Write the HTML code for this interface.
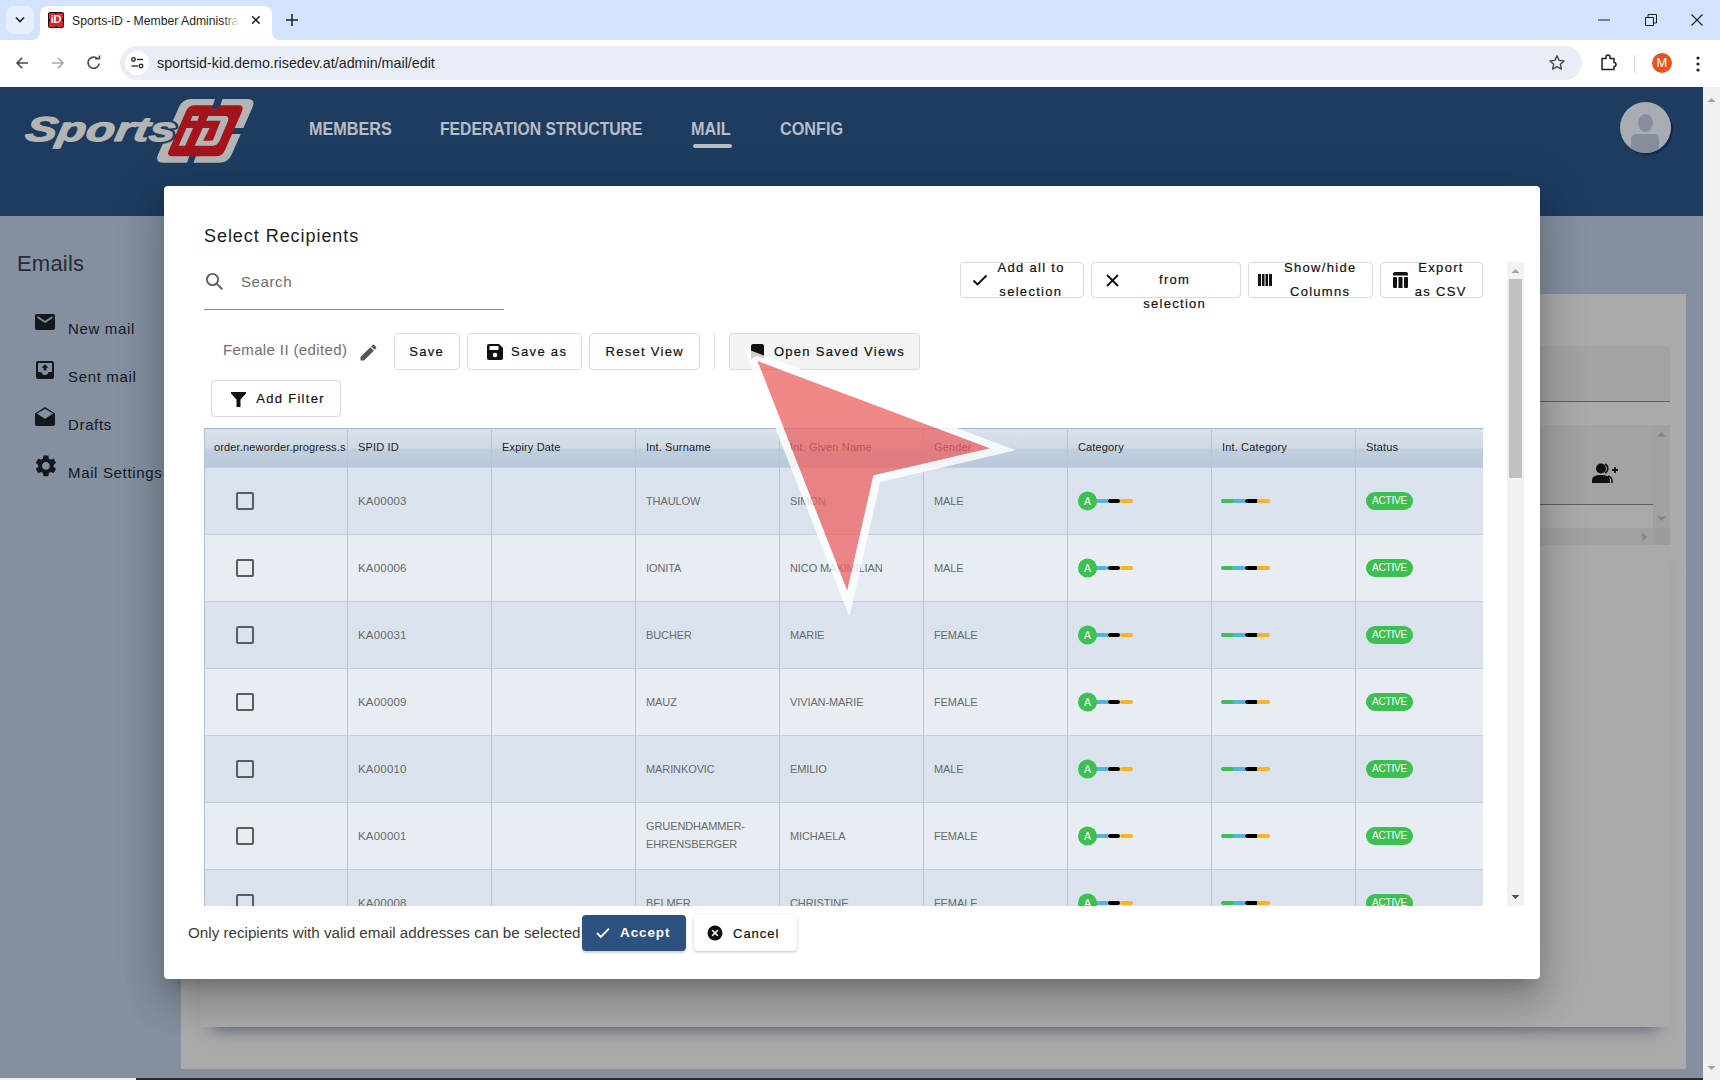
<!DOCTYPE html>
<html><head><meta charset="utf-8">
<style>
*{box-sizing:border-box;margin:0;padding:0}
html,body{width:1720px;height:1080px;overflow:hidden;background:#fff;font-family:"Liberation Sans",sans-serif}
.a{position:absolute}
svg{display:block}
/* chrome */
#tabbar{left:0;top:0;width:1720px;height:40px;background:#d3e3fd}
#toolbar{left:0;top:40px;width:1720px;height:47px;background:#fff}
#omni{left:120px;top:46px;width:1462px;height:34px;border-radius:17px;background:#e9eef6}
/* page */
#page{left:0;top:87px;width:1703px;height:993px;background:#84909f;overflow:hidden}
#hdr{left:0;top:0;width:1703px;height:129px;background:#1d3c60}
.nav{top:119px;height:22px;font-size:18px;font-weight:bold;color:#b9bdc3;white-space:nowrap;transform-origin:0 0;transform:scaleX(0.9)}
.side{left:68px;font-size:15px;color:#15171c;letter-spacing:0.65px;white-space:nowrap}
#dlg{left:164px;top:186px;width:1376px;height:793px;background:#fff;border-radius:4px;box-shadow:0 11px 15px -7px rgba(0,0,0,.2),0 24px 38px 3px rgba(0,0,0,.14),0 9px 46px 8px rgba(0,0,0,.12)}
.bt{font-size:13px;color:#111;letter-spacing:1.3px;white-space:nowrap;-webkit-text-stroke:0.2px #111}
.th{background:linear-gradient(#d9e2eb,#d0dae5 49%,#c0cfde 51%,#b9c9d9);border-top:1px solid #a6b6c8}
.htx{top:13px;font-size:11px;letter-spacing:0.15px;color:#1e1e1e;white-space:nowrap;overflow:hidden}
.td{font-size:11px;color:#6a6a6a;white-space:nowrap;letter-spacing:-0.1px}
.id{font-size:11.5px;letter-spacing:0.2px}
.cb{width:18px;height:18px;border:2px solid #5c5c5c;border-radius:2px}
.pill{width:47px;height:18px;border-radius:9px;background:#3cc051;color:#fff;font-size:10px;line-height:18px;text-align:center;letter-spacing:-0.2px}
#vscroll{left:1703px;top:87px;width:17px;height:993px;background:#f1f1f1}
</style></head><body>
<div id="tabbar" class="a">
  <div class="a" style="left:6px;top:6px;width:28px;height:28px;border-radius:8px;background:#e7effd"></div>
  <svg class="a" style="left:13px;top:14px" width="14" height="12" viewBox="0 0 14 12"><path d="M3 3.5 L7 7.5 L11 3.5" stroke="#1f1f1f" stroke-width="1.6" fill="none"/></svg>
  <div class="a" style="left:40px;top:6px;width:232px;height:34px;background:#fff;border-radius:8px 8px 0 0"></div>
  <div class="a" style="left:32px;top:32px;width:8px;height:8px;background:#fff"></div>
  <div class="a" style="left:32px;top:32px;width:8px;height:8px;background:#d3e3fd;border-radius:0 0 8px 0"></div>
  <div class="a" style="left:272px;top:32px;width:8px;height:8px;background:#fff"></div>
  <div class="a" style="left:272px;top:32px;width:8px;height:8px;background:#d3e3fd;border-radius:0 0 0 8px"></div>
  <div class="a" style="left:48px;top:12px;width:16px;height:16px;background:#111;border-radius:2px"></div>
  <div class="a" style="left:49px;top:13px;width:14px;height:14px;background:#e41e26;border-radius:1px"></div>
  <div class="a" style="left:48px;top:13px;width:16px;text-align:center;font:bold 11px 'Liberation Sans';color:#fff;letter-spacing:-0.3px">iD</div>
  <div class="a" style="left:55px;top:12px;width:2px;height:2px;background:#111"></div><div class="a" style="left:55px;top:26px;width:2px;height:2px;background:#111"></div>
  <div class="a" style="left:48px;top:19px;width:2px;height:2px;background:#111"></div><div class="a" style="left:62px;top:19px;width:2px;height:2px;background:#111"></div>
  <div class="a" style="left:72px;top:13.5px;width:168px;height:20px;overflow:hidden;white-space:nowrap;font-size:12.2px;color:#1f1f1f">Sports-iD - Member Administration</div>
  <div class="a" style="left:222px;top:8px;width:24px;height:24px;background:linear-gradient(90deg,rgba(255,255,255,0),#fff 75%)"></div>
  <svg class="a" style="left:251px;top:15px" width="10" height="10" viewBox="0 0 10 10"><path d="M1.2 1.2 L8.6 8.6 M8.6 1.2 L1.2 8.6" stroke="#1f1f1f" stroke-width="1.5"/></svg>
  <svg class="a" style="left:285px;top:13px" width="14" height="14" viewBox="0 0 14 14"><path d="M7 1 V13 M1 7 H13" stroke="#1f1f1f" stroke-width="1.5"/></svg>
  <svg class="a" style="left:1598px;top:19px" width="14" height="2" viewBox="0 0 14 2"><path d="M0 1 H12" stroke="#1f1f1f" stroke-width="1"/></svg>
  <svg class="a" style="left:1645px;top:14px" width="12" height="12" viewBox="0 0 12 12"><path d="M0.5 3.5 H8.5 V11.5 H0.5 Z M3 3.5 V0.5 H11.5 V9 H8.5" stroke="#1f1f1f" stroke-width="1" fill="none"/></svg>
  <svg class="a" style="left:1691px;top:14px" width="12" height="12" viewBox="0 0 12 12"><path d="M0.5 0.5 L11.5 11.5 M11.5 0.5 L0.5 11.5" stroke="#1f1f1f" stroke-width="1.1"/></svg>
</div>
<div id="toolbar" class="a">
  <svg class="a" style="left:14px;top:15px" width="16" height="16" viewBox="0 0 16 16"><path d="M14 8 H3 M8.2 2.8 L3 8 L8.2 13.2" stroke="#474747" stroke-width="1.6" fill="none"/></svg>
  <svg class="a" style="left:50px;top:15px" width="16" height="16" viewBox="0 0 16 16"><path d="M2 8 H13 M7.8 2.8 L13 8 L7.8 13.2" stroke="#a8a8a8" stroke-width="1.6" fill="none"/></svg>
  <svg class="a" style="left:86px;top:15px" width="16" height="16" viewBox="0 0 16 16"><path d="M13.2 8.5 A5.6 5.6 0 1 1 11.6 3.7" stroke="#474747" stroke-width="1.6" fill="none"/><path d="M9.2 3.6 H13.5 V0.5" stroke="#474747" stroke-width="1.6" fill="none"/></svg>
</div>
<div id="omni" class="a">
  <div class="a" style="left:5px;top:5px;width:24px;height:24px;border-radius:12px;background:#fff"></div>
  <svg class="a" style="left:11px;top:11px" width="13" height="12" viewBox="0 0 13 12"><circle cx="2.5" cy="2.5" r="1.8" stroke="#1f1f1f" stroke-width="1.3" fill="none"/><path d="M6 2.5 H12" stroke="#1f1f1f" stroke-width="1.3"/><circle cx="10" cy="9" r="1.8" stroke="#1f1f1f" stroke-width="1.3" fill="none"/><path d="M0.5 9 H7" stroke="#1f1f1f" stroke-width="1.3"/></svg>
  <div class="a" style="left:37px;top:9px;font-size:14.3px;color:#1f1f1f;white-space:nowrap">sportsid-kid.demo.risedev.at/admin/mail/edit</div>
  <svg class="a" style="left:1428px;top:8px" width="18" height="18" viewBox="0 0 18 18"><path d="M9 1.8 L11.1 6.4 L16 6.9 L12.3 10.2 L13.4 15.1 L9 12.6 L4.6 15.1 L5.7 10.2 L2 6.9 L6.9 6.4 Z" stroke="#474747" stroke-width="1.4" fill="none" stroke-linejoin="round"/></svg>
</div>
<div class="a" style="left:0;top:40px">
  <svg class="a" style="left:1600px;top:14px" width="18" height="18" viewBox="0 0 18 18"><path d="M2 4.5 H6 V3 A2 2 0 0 1 10 3 V4.5 H14 V8.5 A2 2 0 0 1 14 12.5 V15.5 H2 Z" stroke="#1f1f1f" stroke-width="1.5" fill="none" stroke-linejoin="round"/></svg>
  <div class="a" style="left:1634px;top:15px;width:1px;height:18px;background:#c4d5f5"></div>
  <div class="a" style="left:1652px;top:13px;width:20px;height:20px;border-radius:10px;background:#e8521e;color:#fff;font-size:13px;line-height:20px;text-align:center">M</div>
  <svg class="a" style="left:1695px;top:15px" width="6" height="18" viewBox="0 0 6 18"><circle cx="3" cy="3" r="1.6" fill="#1f1f1f"/><circle cx="3" cy="9" r="1.6" fill="#1f1f1f"/><circle cx="3" cy="15" r="1.6" fill="#1f1f1f"/></svg>
</div>

<div id="page" class="a"></div>
<div id="hdr" class="a" style="top:87px"></div>
<!-- logo -->
<svg class="a" style="left:0;top:0" width="270" height="180" viewBox="0 0 270 180">
  <path d="M178.9,107.2 Q182.5,99.0 191.5,99.0 L247.1,99.0 Q256.1,99.0 252.5,107.2 L231.7,154.5 Q228.1,162.7 219.1,162.7 L163.5,162.7 Q154.5,162.7 158.1,154.5 Z" fill="#b4b4b4"/>
  <path d="M228,128 L248,128 L248,134 L228,134 Z" fill="#1d3c60"/>
  <path d="M190.5,152.5 L197,152.5 L192.5,166 L186,166 Z" fill="#1d3c60"/>
  <path d="M186.0,111.2 Q188.6,105.3 195.1,105.3 L238.1,105.3 Q244.6,105.3 242.0,111.2 L224.8,150.4 Q222.2,156.3 215.7,156.3 L172.7,156.3 Q166.2,156.3 168.8,150.4 Z" fill="#a3141b"/>
  <path d="M216,96 L223.5,96 L219.3,108.5 L211.8,108.5 Z" fill="#1d3c60"/>
  <path d="M192.4,116.1 L199.1,116.1 L197.6,120.7 L190.6,120.7 Z M186.5,128.1 L193.1,128.1 L185.2,145.7 L178.7,145.7 Z M208.3,116.1 L225,116.1 Q229.5,116.1 228,121 L219.5,141 Q217.5,145.7 212,145.7 L194.6,145.7 L202.8,128.1 L209.6,128.1 L203.1,140.7 L211.3,140.7 Q213.5,140.7 214.3,137 L220.6,120.7 L206.1,120.7 Z" fill="#b4b4b4"/>
  <g transform="translate(24,140.8) skewX(-10)"><text x="0" y="0" font-family="Liberation Sans" font-weight="bold" font-style="italic" font-size="34.5" fill="#1d3c60" stroke="#1d3c60" stroke-width="5" stroke-linejoin="round" textLength="150" lengthAdjust="spacingAndGlyphs">Sports</text></g>
  <g transform="translate(24,140.8) skewX(-10)"><text x="0" y="0" font-family="Liberation Sans" font-weight="bold" font-style="italic" font-size="34.5" fill="#b4b4b4" stroke="#b4b4b4" stroke-width="1.2" stroke-linejoin="round" textLength="150" lengthAdjust="spacingAndGlyphs">Sports</text></g>
</svg>
<!-- nav -->
<div class="a nav" style="left:309px;width:80px">MEMBERS</div>
<div class="a nav" style="left:439.5px;width:201px;transform:scaleX(0.874)">FEDERATION STRUCTURE</div>
<div class="a nav" style="left:691px;width:39px">MAIL</div>
<div class="a nav" style="left:779.5px;width:62px">CONFIG</div>
<div class="a" style="left:693px;top:144px;width:39px;height:4px;border-radius:2px;background:#b9bdc3"></div>
<!-- avatar -->
<div class="a" style="left:1622px;top:104px;width:51px;height:51px;border-radius:50%;background:#16294a"></div>
<div class="a" style="left:1620px;top:102px;width:51px;height:51px;border-radius:50%;background:#a9adb3;overflow:hidden">
  <div class="a" style="left:18px;top:12px;width:15px;height:18px;border-radius:50%;background:#858f9c"></div>
  <div class="a" style="left:11px;top:32px;width:28px;height:30px;border-radius:5px 5px 0 0;background:#858f9c"></div>
</div>
<!-- sidebar -->
<div class="a" style="left:17px;top:251px;font-size:22px;color:#272b34;letter-spacing:0.2px">Emails</div>
<div class="a side" style="top:320px">New mail</div>
<div class="a side" style="top:368px">Sent mail</div>
<div class="a side" style="top:416px">Drafts</div>
<div class="a side" style="top:464px">Mail Settings</div>
<svg class="a" style="left:35px;top:314px" width="20" height="16" viewBox="0 0 20 16"><rect x="0" y="0" width="20" height="16" rx="2" fill="#15171c"/><path d="M2.5 3 L10 8 L17.5 3" stroke="#84909f" stroke-width="1.6" fill="none"/></svg>
<svg class="a" style="left:36px;top:361px" width="18" height="18" viewBox="0 0 18 18"><path fill-rule="evenodd" fill="#15171c" d="M2 0 H16 Q18 0 18 2 V16 Q18 18 16 18 H2 Q0 18 0 16 V2 Q0 0 2 0 Z M2 2 V11 H5.5 Q6 14 9 14 Q12 14 12.5 11 H16 V2 Z"/><path fill="#15171c" d="M9 3.2 L5.5 6.8 H7.6 V9.6 H10.4 V6.8 H12.5 Z"/></svg>
<svg class="a" style="left:35px;top:407px" width="20" height="19" viewBox="0 0 20 19"><path d="M0 6.5 L10 0 L20 6.5 V17 Q20 19 18 19 H2 Q0 19 0 17 Z" fill="#15171c"/><path d="M1.8 6.6 L10 1.9 L18.2 6.6 L10 11.8 Z" fill="#84909f"/></svg>
<svg class="a" style="left:32.5px;top:453px" width="25.8" height="25.8" viewBox="0 0 24 24"><path fill="#15171c" d="M19.14 12.94c.04-.3.06-.61.06-.94 0-.32-.02-.64-.07-.94l2.03-1.58c.18-.14.23-.41.12-.61l-1.92-3.32c-.12-.22-.37-.29-.59-.22l-2.39.96c-.5-.38-1.03-.7-1.62-.94l-.36-2.54c-.04-.24-.24-.41-.48-.41h-3.84c-.24 0-.43.17-.47.41l-.36 2.54c-.59.24-1.13.57-1.62.94l-2.39-.96c-.22-.08-.47 0-.59.22L2.74 8.87c-.12.21-.08.47.12.61l2.03 1.58c-.05.3-.09.63-.09.94s.02.64.07.94l-2.03 1.58c-.18.14-.23.41-.12.61l1.92 3.32c.12.22.37.29.59.22l2.39-.96c.5.38 1.03.7 1.62.94l.36 2.54c.05.24.24.41.48.41h3.84c.24 0 .44-.17.47-.41l.36-2.54c.59-.24 1.13-.56 1.62-.94l2.39.96c.22.08.47 0 .59-.22l1.92-3.32c.12-.22.07-.47-.12-.61l-2.01-1.58zM12 15.6c-1.98 0-3.6-1.62-3.6-3.6s1.62-3.6 3.6-3.6 3.6 1.62 3.6 3.6-1.62 3.6-3.6 3.6z"/></svg>
<!-- background card -->
<div class="a" style="left:180px;top:294px;width:1506px;height:775px;background:#aaaaaa;border-left:1px solid #8a929c"></div>
<div class="a" style="left:200px;top:346px;width:1470px;height:56px;background:#a3a3a3;border-radius:4px 4px 0 0;border-bottom:1px solid #5f5f5f"></div>
<div class="a" style="left:200px;top:425px;width:1453px;height:80px;background:#a3a3a3;border-bottom:1px solid #5f5f5f"></div>
<div class="a" style="left:1653px;top:425px;width:17px;height:103px;background:#a1a1a1"></div>
<div class="a" style="left:200px;top:528px;width:1453px;height:17px;background:#a1a1a1"></div>
<div class="a" style="left:1653px;top:528px;width:17px;height:17px;background:#9c9c9c"></div>
<svg class="a" style="left:1656px;top:431px" width="11" height="6" viewBox="0 0 11 6"><path d="M1 5.5 L5.5 1 L10 5.5 Z" fill="#868686"/></svg>
<svg class="a" style="left:1656px;top:516px" width="11" height="6" viewBox="0 0 11 6"><path d="M1 0.5 L5.5 5 L10 0.5 Z" fill="#868686"/></svg>
<svg class="a" style="left:1642px;top:532px" width="6" height="10" viewBox="0 0 6 10"><path d="M0.5 0.5 L5 5 L0.5 9.5 Z" fill="#868686"/></svg>
<svg class="a" style="left:1592px;top:463px" width="26" height="20" viewBox="0 0 26 20"><circle cx="9" cy="5.5" r="5" fill="#111"/><path d="M0 20 V17 Q0 12 9 12 Q18 12 18 17 V20 Z" fill="#111"/><path d="M13 1 A5 5 0 0 1 13 10" stroke="#111" stroke-width="1.5" fill="none"/><path d="M16 13 Q20 14 20 18 V20" stroke="#111" stroke-width="1.5" fill="none"/><path d="M23 4 V10 M20 7 H26" stroke="#111" stroke-width="1.8"/></svg>
<div class="a" style="left:200px;top:545px;width:1470px;height:482px;background:#aaaaaa;box-shadow:0 14px 16px -12px rgba(30,50,80,0.6)"></div>
<!-- taskbar edge -->
<div class="a" style="left:0;top:1078px;width:1720px;height:2px;background:#2a2a2a"></div>
<div class="a" style="left:0;top:1078px;width:136px;height:2px;background:#f0f0f0"></div>
<div id="dlg" class="a"></div>
<div class="a" style="left:204px;top:226px;font-size:18px;color:#1c1c1c;letter-spacing:0.95px;white-space:nowrap">Select Recipients</div>
<svg class="a" style="left:205px;top:272px" width="19" height="19" viewBox="0 0 19 19"><circle cx="7.5" cy="7.5" r="5.6" stroke="#5f5f5f" stroke-width="1.9" fill="none"/><path d="M11.6 11.6 L17.3 17.3" stroke="#5f5f5f" stroke-width="2"/></svg>
<div class="a" style="left:241px;top:273px;font-size:15px;color:#6e6e6e;letter-spacing:0.6px">Search</div>
<div class="a" style="left:204px;top:309px;width:300px;height:1px;background:#8c8c8c"></div>
<div class="a" style="left:960px;top:262px;width:124px;height:36px;background:#fff;border:1px solid #dadada;border-radius:4px"></div>
<div class="a" style="left:1091px;top:262px;width:150px;height:36px;background:#fff;border:1px solid #dadada;border-radius:4px"></div>
<div class="a" style="left:1248px;top:262px;width:125px;height:36px;background:#fff;border:1px solid #dadada;border-radius:4px"></div>
<div class="a" style="left:1380px;top:262px;width:103px;height:36px;background:#fff;border:1px solid #dadada;border-radius:4px"></div>
<div class="a bt" style="left:930.5px;top:260px;width:200px;text-align:center;padding-left:1.3px;">Add all to</div>
<div class="a bt" style="left:930.2px;top:284px;width:200px;text-align:center;padding-left:1.3px;">selection</div>
<div class="a bt" style="left:1074.0px;top:272px;width:200px;text-align:center;padding-left:1.3px;">from</div>
<div class="a bt" style="left:1074.0px;top:296px;width:200px;text-align:center;padding-left:1.3px;">selection</div>
<div class="a bt" style="left:1219.6px;top:260px;width:200px;text-align:center;padding-left:1.3px;">Show/hide</div>
<div class="a bt" style="left:1219.5px;top:284px;width:200px;text-align:center;padding-left:1.3px;">Columns</div>
<div class="a bt" style="left:1340.4px;top:260px;width:200px;text-align:center;padding-left:1.3px;">Export</div>
<div class="a bt" style="left:1340.1px;top:284px;width:200px;text-align:center;padding-left:1.3px;">as CSV</div>
<svg class="a" style="left:972px;top:274px" width="16" height="13" viewBox="0 0 16 13"><path d="M1.5 6.5 L5.5 10.5 L14.5 1.5" stroke="#111" stroke-width="1.9" fill="none"/></svg>
<svg class="a" style="left:1106px;top:274px" width="13" height="13" viewBox="0 0 13 13"><path d="M1 1 L12 12 M12 1 L1 12" stroke="#111" stroke-width="1.8"/></svg>
<svg class="a" style="left:1258px;top:274px" width="14" height="12" viewBox="0 0 14 12"><rect x="0" y="0" width="3" height="12" fill="#111"/><rect x="4" y="0" width="2.5" height="12" fill="#111"/><rect x="7.5" y="0" width="2.5" height="12" fill="#111"/><rect x="11" y="0" width="3" height="12" fill="#111"/></svg>
<svg class="a" style="left:1393px;top:272px" width="15" height="16" viewBox="0 0 15 16"><path d="M0 2 Q0 0 2 0 H13 Q15 0 15 2 V3.5 H0 Z" fill="#111"/><rect x="0" y="5" width="4" height="11" rx="1" fill="#111"/><rect x="5.5" y="5" width="4" height="11" fill="#111"/><rect x="11" y="5" width="4" height="11" rx="1" fill="#111"/></svg>
<div class="a" style="left:223px;top:341px;font-size:15px;color:#707070;letter-spacing:0.38px;white-space:nowrap">Female II (edited)</div>
<svg class="a" style="left:360px;top:344px" width="17" height="17" viewBox="0 0 17 17"><path d="M0.5 13 V16.5 H4 L13.8 6.7 L10.3 3.2 Z M16.2 4.3 Q16.8 3.7 16.2 3.1 L13.9 0.8 Q13.3 0.2 12.7 0.8 L11.2 2.3 L14.7 5.8 Z" fill="#555"/></svg>
<div class="a" style="left:394px;top:333px;width:66px;height:37px;background:#fff;border:1px solid #dadada;border-radius:4px"></div>
<div class="a" style="left:467px;top:333px;width:115px;height:37px;background:#fff;border:1px solid #dadada;border-radius:4px"></div>
<div class="a" style="left:589px;top:333px;width:111px;height:37px;background:#fff;border:1px solid #dadada;border-radius:4px"></div>
<div class="a" style="left:714px;top:333px;width:1px;height:37px;background:#e0e0e0"></div>
<div class="a" style="left:729px;top:333px;width:191px;height:37px;background:#f3f3f3;border:1px solid #d9d9d9;border-radius:4px"></div>
<div class="a" style="left:211px;top:380px;width:130px;height:37px;background:#fff;border:1px solid #dadada;border-radius:4px"></div>
<div class="a bt" style="left:326.1px;top:343.5px;width:200px;text-align:center;padding-left:1.3px;">Save</div>
<div class="a bt" style="left:438.5px;top:343.5px;width:200px;text-align:center;padding-left:1.3px;">Save as</div>
<div class="a bt" style="left:544.1px;top:343.5px;width:200px;text-align:center;padding-left:1.3px;">Reset View</div>
<div class="a bt" style="left:738.8px;top:343.5px;width:200px;text-align:center;padding-left:1.3px;">Open Saved Views</div>
<div class="a bt" style="left:189.9px;top:390.6px;width:200px;text-align:center;padding-left:1.3px;">Add Filter</div>
<svg class="a" style="left:487px;top:344px" width="16" height="16" viewBox="0 0 16 16"><path d="M0 2 Q0 0 2 0 H12 L16 4 V14 Q16 16 14 16 H2 Q0 16 0 14 Z" fill="#111"/><rect x="2.5" y="2" width="9" height="4" fill="#fff"/><circle cx="8" cy="11" r="2.3" fill="#fff"/></svg>
<svg class="a" style="left:751px;top:344px" width="13" height="15" viewBox="0 0 13 15"><path d="M0 2 Q0 0 2 0 H11 Q13 0 13 2 V15 L6.5 11.5 L0 15 Z" fill="#111"/></svg>
<svg class="a" style="left:231px;top:392px" width="15" height="15" viewBox="0 0 15 15"><path d="M0 0 H15 V1.5 L9.5 7.5 V14.5 Q9.5 15 9 15 H6 Q5.5 15 5.5 14.5 V7.5 L0 1.5 Z" fill="#111"/></svg>
<div id="tbl" class="a" style="left:204px;top:428px;width:1279px;height:478px;overflow:hidden">
<div class="a th" style="left:0;top:0;width:1279px;height:40px"></div>
<div class="a htx" style="left:10px;width:133px">order.neworder.progress.s</div>
<div class="a htx" style="left:154px;width:133px">SPID ID</div>
<div class="a htx" style="left:298px;width:133px">Expiry Date</div>
<div class="a htx" style="left:442px;width:133px">Int. Surname</div>
<div class="a htx" style="left:586px;width:133px">Int. Given Name</div>
<div class="a htx" style="left:730px;width:133px">Gender</div>
<div class="a htx" style="left:874px;width:133px">Category</div>
<div class="a htx" style="left:1018px;width:133px">Int. Category</div>
<div class="a htx" style="left:1162px;width:116px">Status</div>
<div class="a" style="left:0;top:39px;width:1279px;height:67px;background:#dae3ed;border-top:1px solid #c6cfd9"></div>
<div class="a cb" style="left:32px;top:64px"></div>
<div class="a td id" style="left:154px;top:67px">KA00003</div>
<div class="a td" style="left:442px;top:67px">THAULOW</div>
<div class="a td" style="left:586px;top:67px">SIMON</div>
<div class="a td" style="left:730px;top:67px">MALE</div>
<svg class="a" style="left:863px;top:63px" width="80" height="20" viewBox="0 0 80 20"><rect x="29" y="8" width="12" height="4" fill="#52b3e0"/><rect x="41" y="8" width="12" height="4" rx="2" fill="#000"/><rect x="53" y="8" width="13" height="4" rx="2" fill="#fbb321"/><circle cx="20.5" cy="10" r="9.5" fill="#3cc051"/><text x="20.5" y="13.8" text-anchor="middle" font-family="Liberation Sans" font-size="10.5" fill="#fff">A</text></svg>
<svg class="a" style="left:1007px;top:63px" width="80" height="20" viewBox="0 0 80 20"><rect x="10" y="8" width="13" height="4" rx="2" fill="#3cc051"/><rect x="22" y="8" width="12" height="4" fill="#52b3e0"/><rect x="34" y="8" width="13" height="4" rx="2" fill="#000"/><rect x="46" y="8" width="13" height="4" rx="2" fill="#fbb321"/></svg>
<div class="a pill" style="left:1162px;top:64px">ACTIVE</div>
<div class="a" style="left:0;top:106px;width:1279px;height:67px;background:#e8edf4;border-top:1px solid #c6cfd9"></div>
<div class="a cb" style="left:32px;top:131px"></div>
<div class="a td id" style="left:154px;top:134px">KA00006</div>
<div class="a td" style="left:442px;top:134px">IONITA</div>
<div class="a td" style="left:586px;top:134px">NICO MAXIMILIAN</div>
<div class="a td" style="left:730px;top:134px">MALE</div>
<svg class="a" style="left:863px;top:130px" width="80" height="20" viewBox="0 0 80 20"><rect x="29" y="8" width="12" height="4" fill="#52b3e0"/><rect x="41" y="8" width="12" height="4" rx="2" fill="#000"/><rect x="53" y="8" width="13" height="4" rx="2" fill="#fbb321"/><circle cx="20.5" cy="10" r="9.5" fill="#3cc051"/><text x="20.5" y="13.8" text-anchor="middle" font-family="Liberation Sans" font-size="10.5" fill="#fff">A</text></svg>
<svg class="a" style="left:1007px;top:130px" width="80" height="20" viewBox="0 0 80 20"><rect x="10" y="8" width="13" height="4" rx="2" fill="#3cc051"/><rect x="22" y="8" width="12" height="4" fill="#52b3e0"/><rect x="34" y="8" width="13" height="4" rx="2" fill="#000"/><rect x="46" y="8" width="13" height="4" rx="2" fill="#fbb321"/></svg>
<div class="a pill" style="left:1162px;top:131px">ACTIVE</div>
<div class="a" style="left:0;top:173px;width:1279px;height:67px;background:#dae3ed;border-top:1px solid #c6cfd9"></div>
<div class="a cb" style="left:32px;top:198px"></div>
<div class="a td id" style="left:154px;top:201px">KA00031</div>
<div class="a td" style="left:442px;top:201px">BUCHER</div>
<div class="a td" style="left:586px;top:201px">MARIE</div>
<div class="a td" style="left:730px;top:201px">FEMALE</div>
<svg class="a" style="left:863px;top:197px" width="80" height="20" viewBox="0 0 80 20"><rect x="29" y="8" width="12" height="4" fill="#52b3e0"/><rect x="41" y="8" width="12" height="4" rx="2" fill="#000"/><rect x="53" y="8" width="13" height="4" rx="2" fill="#fbb321"/><circle cx="20.5" cy="10" r="9.5" fill="#3cc051"/><text x="20.5" y="13.8" text-anchor="middle" font-family="Liberation Sans" font-size="10.5" fill="#fff">A</text></svg>
<svg class="a" style="left:1007px;top:197px" width="80" height="20" viewBox="0 0 80 20"><rect x="10" y="8" width="13" height="4" rx="2" fill="#3cc051"/><rect x="22" y="8" width="12" height="4" fill="#52b3e0"/><rect x="34" y="8" width="13" height="4" rx="2" fill="#000"/><rect x="46" y="8" width="13" height="4" rx="2" fill="#fbb321"/></svg>
<div class="a pill" style="left:1162px;top:198px">ACTIVE</div>
<div class="a" style="left:0;top:240px;width:1279px;height:67px;background:#e8edf4;border-top:1px solid #c6cfd9"></div>
<div class="a cb" style="left:32px;top:265px"></div>
<div class="a td id" style="left:154px;top:268px">KA00009</div>
<div class="a td" style="left:442px;top:268px">MAUZ</div>
<div class="a td" style="left:586px;top:268px">VIVIAN-MARIE</div>
<div class="a td" style="left:730px;top:268px">FEMALE</div>
<svg class="a" style="left:863px;top:264px" width="80" height="20" viewBox="0 0 80 20"><rect x="29" y="8" width="12" height="4" fill="#52b3e0"/><rect x="41" y="8" width="12" height="4" rx="2" fill="#000"/><rect x="53" y="8" width="13" height="4" rx="2" fill="#fbb321"/><circle cx="20.5" cy="10" r="9.5" fill="#3cc051"/><text x="20.5" y="13.8" text-anchor="middle" font-family="Liberation Sans" font-size="10.5" fill="#fff">A</text></svg>
<svg class="a" style="left:1007px;top:264px" width="80" height="20" viewBox="0 0 80 20"><rect x="10" y="8" width="13" height="4" rx="2" fill="#3cc051"/><rect x="22" y="8" width="12" height="4" fill="#52b3e0"/><rect x="34" y="8" width="13" height="4" rx="2" fill="#000"/><rect x="46" y="8" width="13" height="4" rx="2" fill="#fbb321"/></svg>
<div class="a pill" style="left:1162px;top:265px">ACTIVE</div>
<div class="a" style="left:0;top:307px;width:1279px;height:67px;background:#dae3ed;border-top:1px solid #c6cfd9"></div>
<div class="a cb" style="left:32px;top:332px"></div>
<div class="a td id" style="left:154px;top:335px">KA00010</div>
<div class="a td" style="left:442px;top:335px">MARINKOVIC</div>
<div class="a td" style="left:586px;top:335px">EMILIO</div>
<div class="a td" style="left:730px;top:335px">MALE</div>
<svg class="a" style="left:863px;top:331px" width="80" height="20" viewBox="0 0 80 20"><rect x="29" y="8" width="12" height="4" fill="#52b3e0"/><rect x="41" y="8" width="12" height="4" rx="2" fill="#000"/><rect x="53" y="8" width="13" height="4" rx="2" fill="#fbb321"/><circle cx="20.5" cy="10" r="9.5" fill="#3cc051"/><text x="20.5" y="13.8" text-anchor="middle" font-family="Liberation Sans" font-size="10.5" fill="#fff">A</text></svg>
<svg class="a" style="left:1007px;top:331px" width="80" height="20" viewBox="0 0 80 20"><rect x="10" y="8" width="13" height="4" rx="2" fill="#3cc051"/><rect x="22" y="8" width="12" height="4" fill="#52b3e0"/><rect x="34" y="8" width="13" height="4" rx="2" fill="#000"/><rect x="46" y="8" width="13" height="4" rx="2" fill="#fbb321"/></svg>
<div class="a pill" style="left:1162px;top:332px">ACTIVE</div>
<div class="a" style="left:0;top:374px;width:1279px;height:67px;background:#e8edf4;border-top:1px solid #c6cfd9"></div>
<div class="a cb" style="left:32px;top:399px"></div>
<div class="a td id" style="left:154px;top:402px">KA00001</div>
<div class="a td" style="left:442px;top:389px;line-height:18px">GRUENDHAMMER-<br>EHRENSBERGER</div>
<div class="a td" style="left:586px;top:402px">MICHAELA</div>
<div class="a td" style="left:730px;top:402px">FEMALE</div>
<svg class="a" style="left:863px;top:398px" width="80" height="20" viewBox="0 0 80 20"><rect x="29" y="8" width="12" height="4" fill="#52b3e0"/><rect x="41" y="8" width="12" height="4" rx="2" fill="#000"/><rect x="53" y="8" width="13" height="4" rx="2" fill="#fbb321"/><circle cx="20.5" cy="10" r="9.5" fill="#3cc051"/><text x="20.5" y="13.8" text-anchor="middle" font-family="Liberation Sans" font-size="10.5" fill="#fff">A</text></svg>
<svg class="a" style="left:1007px;top:398px" width="80" height="20" viewBox="0 0 80 20"><rect x="10" y="8" width="13" height="4" rx="2" fill="#3cc051"/><rect x="22" y="8" width="12" height="4" fill="#52b3e0"/><rect x="34" y="8" width="13" height="4" rx="2" fill="#000"/><rect x="46" y="8" width="13" height="4" rx="2" fill="#fbb321"/></svg>
<div class="a pill" style="left:1162px;top:399px">ACTIVE</div>
<div class="a" style="left:0;top:441px;width:1279px;height:67px;background:#dae3ed;border-top:1px solid #c6cfd9"></div>
<div class="a cb" style="left:32px;top:466px"></div>
<div class="a td id" style="left:154px;top:469px">KA00008</div>
<div class="a td" style="left:442px;top:469px">BELMER</div>
<div class="a td" style="left:586px;top:469px">CHRISTINE</div>
<div class="a td" style="left:730px;top:469px">FEMALE</div>
<svg class="a" style="left:863px;top:465px" width="80" height="20" viewBox="0 0 80 20"><rect x="29" y="8" width="12" height="4" fill="#52b3e0"/><rect x="41" y="8" width="12" height="4" rx="2" fill="#000"/><rect x="53" y="8" width="13" height="4" rx="2" fill="#fbb321"/><circle cx="20.5" cy="10" r="9.5" fill="#3cc051"/><text x="20.5" y="13.8" text-anchor="middle" font-family="Liberation Sans" font-size="10.5" fill="#fff">A</text></svg>
<svg class="a" style="left:1007px;top:465px" width="80" height="20" viewBox="0 0 80 20"><rect x="10" y="8" width="13" height="4" rx="2" fill="#3cc051"/><rect x="22" y="8" width="12" height="4" fill="#52b3e0"/><rect x="34" y="8" width="13" height="4" rx="2" fill="#000"/><rect x="46" y="8" width="13" height="4" rx="2" fill="#fbb321"/></svg>
<div class="a pill" style="left:1162px;top:466px">ACTIVE</div>
<div class="a" style="left:143px;top:0;width:1px;height:478px;background:#b9c4cf"></div>
<div class="a" style="left:287px;top:0;width:1px;height:478px;background:#b9c4cf"></div>
<div class="a" style="left:431px;top:0;width:1px;height:478px;background:#b9c4cf"></div>
<div class="a" style="left:575px;top:0;width:1px;height:478px;background:#b9c4cf"></div>
<div class="a" style="left:719px;top:0;width:1px;height:478px;background:#b9c4cf"></div>
<div class="a" style="left:863px;top:0;width:1px;height:478px;background:#b9c4cf"></div>
<div class="a" style="left:1007px;top:0;width:1px;height:478px;background:#b9c4cf"></div>
<div class="a" style="left:1151px;top:0;width:1px;height:478px;background:#b9c4cf"></div>
<div class="a" style="left:0;top:0;width:1px;height:478px;background:#b3c0cd"></div>
</div>
<div class="a" style="left:1507px;top:262px;width:17px;height:644px;background:#f1f1f1"></div>
<div class="a" style="left:1509px;top:279px;width:13px;height:199px;background:#c1c1c1"></div>
<svg class="a" style="left:1511px;top:268px" width="9" height="6" viewBox="0 0 9 6"><path d="M0.5 5 L4.5 1 L8.5 5 Z" fill="#a3a3a3"/></svg>
<svg class="a" style="left:1511px;top:894px" width="9" height="6" viewBox="0 0 9 6"><path d="M0.5 1 L4.5 5 L8.5 1 Z" fill="#505050"/></svg>
<div class="a" style="left:188px;top:924px;font-size:15.2px;color:#3a3a3a;white-space:nowrap">Only recipients with valid email addresses can be selected</div>
<div class="a" style="left:582px;top:915px;width:104px;height:36px;background:#2d5282;border-radius:4px;box-shadow:0 2px 2px rgba(0,0,0,0.18)"></div>
<svg class="a" style="left:596px;top:927px" width="14" height="12" viewBox="0 0 14 12"><path d="M1 6 L4.8 9.8 L13 1.6" stroke="#fff" stroke-width="1.9" fill="none"/></svg>
<div class="a" style="left:620px;top:925px;font-size:13.5px;font-weight:bold;color:#fff;letter-spacing:0.9px">Accept</div>
<div class="a" style="left:694px;top:915px;width:103px;height:36px;background:#fff;border-radius:4px;box-shadow:0 1px 3px rgba(0,0,0,0.25)"></div>
<svg class="a" style="left:707px;top:925px" width="16" height="16" viewBox="0 0 16 16"><circle cx="8" cy="8" r="7.5" fill="#111"/><path d="M5.2 5.2 L10.8 10.8 M10.8 5.2 L5.2 10.8" stroke="#fff" stroke-width="1.6"/></svg>
<div class="a bt" style="left:733px;top:926px;letter-spacing:1px">Cancel</div>
<div id="vscroll" class="a">
  <svg class="a" style="left:4px;top:10px" width="9" height="6" viewBox="0 0 9 6"><path d="M0.5 5 L4.5 1 L8.5 5 Z" fill="#a3a3a3"/></svg>
  <svg class="a" style="left:4px;top:978px" width="9" height="6" viewBox="0 0 9 6"><path d="M0.5 1 L4.5 5 L8.5 1 Z" fill="#a3a3a3"/></svg>
</div>
<svg class="a" style="left:0;top:0;pointer-events:none" width="1720" height="1080" viewBox="0 0 1720 1080">
<path fill-rule="evenodd" fill="rgba(255,255,255,0.8)" d="M744 348 L1015.8 450.3 L880.3 482 L849.4 616.7 Z M757.5 361 L847.2 590.6 L873.3 475.3 L989.7 448.3 Z"/>
<path fill="rgba(235,100,100,0.77)" d="M757.5 361 L989.7 448.3 L873.3 475.3 L847.2 590.6 Z"/>
</svg>
</body></html>
